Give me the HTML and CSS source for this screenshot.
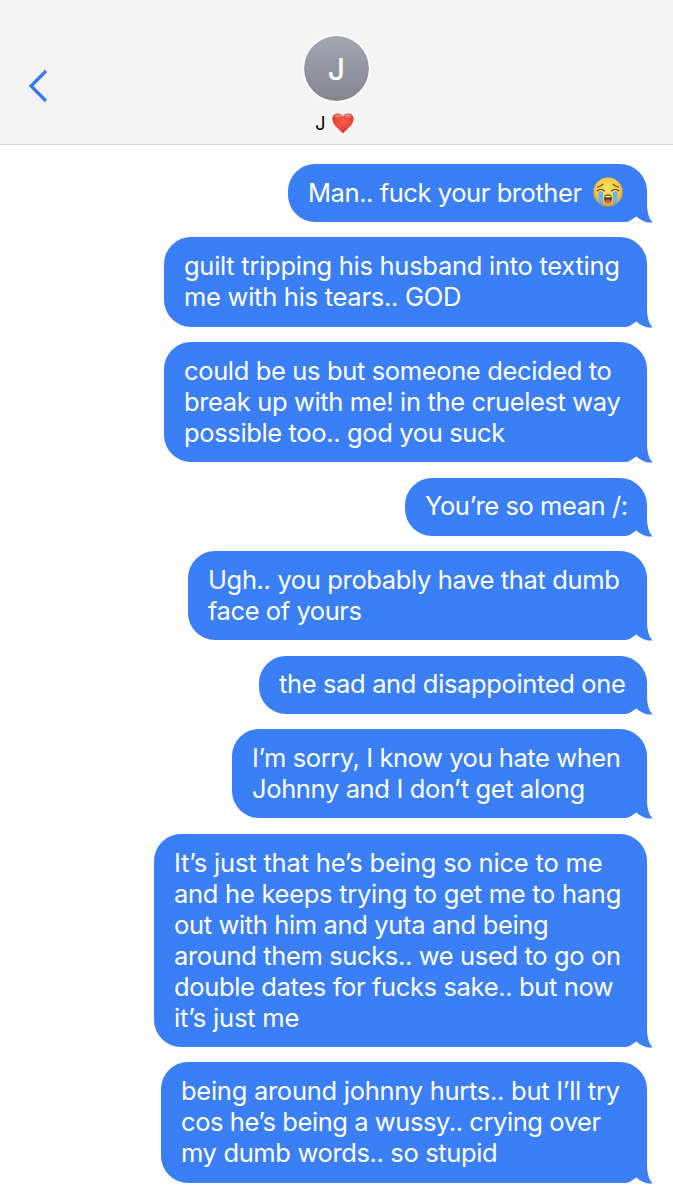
FILE: index.html
```
<!DOCTYPE html>
<html lang="en">
<head>
  <meta charset="utf-8">
  <title>Messages</title>
  <link rel="stylesheet" href="styles.css">
</head>
<body>
  <svg class="defs" width="0" height="0" aria-hidden="true">
    <symbol id="tail" viewBox="0 0 34 30">
      <path d="M0 0H27V9C27 17 28.500 24.500 32.700 28.500C26.500 29.200 20.500 26.500 16 22C13 24.500 11 27.500 5 28H0Z" fill="#3a7ff5"/>
    </symbol>
  </svg>
  <div class="header">
    <button class="back-button" aria-label="Back">
      <svg width="20" height="34" viewBox="0 0 20 34" fill="none" stroke="#3478f2" stroke-width="3.200">
        <path d="M18 2L3 17L18 32"/>
      </svg>
    </button>
    <div class="contact">
      <div class="avatar">J</div>
      <div class="name">
        <span>J</span>
        <svg class="heart" viewBox="0 0 22 21">
          <defs>
            <radialGradient id="heartFill" cx="50%" cy="40%" r="60%">
              <stop offset="0" stop-color="#f4604c"/>
              <stop offset="0.6" stop-color="#ea4938"/>
              <stop offset="1" stop-color="#cf3021"/>
            </radialGradient>
            <linearGradient id="shine" x2="0" y2="1">
              <stop offset="0" stop-color="#fff" stop-opacity="0.55"/>
              <stop offset="1" stop-color="#fff" stop-opacity="0"/>
            </linearGradient>
          </defs>
          <path d="M11 20.500C9 17.500 0.400 12.500 0.400 6C0.400 2.600 2.800 0.500 5.700 0.500C8.300 0.500 10.300 1.900 11 4C11.700 1.900 13.700 0.500 16.300 0.500C19.200 0.500 21.600 2.600 21.600 6C21.600 12.500 13 17.500 11 20.500Z" fill="url(#heartFill)"/>
          <ellipse cx="5.800" cy="3.300" rx="3.400" ry="1.900" fill="url(#shine)"/>
          <ellipse cx="16.200" cy="3.300" rx="3.400" ry="1.900" fill="url(#shine)"/>
        </svg>
      </div>
    </div>
  </div>

  <div class="messages">
    <div class="bubble w-359">
      <span class="tight">Man.. fuck your brother</span>
      <svg class="sob" viewBox="0 0 30 30">
        <defs>
          <radialGradient id="face" cx="50%" cy="40%" r="60%">
            <stop offset="0" stop-color="#ffe368"/>
            <stop offset="0.65" stop-color="#fbc843"/>
            <stop offset="1" stop-color="#dc9a28"/>
          </radialGradient>
        </defs>
        <circle cx="15" cy="15" r="14.600" fill="url(#face)"/>
        <path d="M5.500 14.500H10V27.500Q8 27.500 5.500 25Z" fill="#65b6e9"/>
        <path d="M20 14.500H24.500V25Q22 27.500 20 27.500Z" fill="#65b6e9"/>
        <path d="M4.500 13.800Q8 10.800 11.500 13.800M18.500 13.800Q22 10.800 25.500 13.800M4.500 10Q8 9.500 10 7.200M25.500 10Q22 9.500 20 7.200" fill="none" stroke="#6d461b" stroke-width="1.200" stroke-linecap="round"/>
        <ellipse cx="15" cy="21.500" rx="3.800" ry="4.200" fill="#65361b"/>
        <path d="M12.300 19.500Q15 17.500 17.700 19.500V20.300H12.300Z" fill="#fff"/>
        <ellipse cx="15" cy="24" rx="2.500" ry="1.400" fill="#df6658"/>
      </svg>
      <svg class="tail"><use href="#tail"/></svg>
    </div>
    <div class="bubble w-483">
      <span class="loose">guilt tripping his husband into texting</span><br>
      <span class="loose">me with his tears.. GOD</span>
      <svg class="tail"><use href="#tail"/></svg>
    </div>
    <div class="bubble w-483">
      could be us but someone decided to<br>
      break up with me! in the cruelest way<br>
      possible too.. god you suck
      <svg class="tail"><use href="#tail"/></svg>
    </div>
    <div class="bubble w-242">
      <span class="tight">You’re so mean /:</span>
      <svg class="tail"><use href="#tail"/></svg>
    </div>
    <div class="bubble w-459">
      Ugh.. you probably have that dumb<br>
      <span class="tight">face of yours</span>
      <svg class="tail"><use href="#tail"/></svg>
    </div>
    <div class="bubble w-388">
      the sad and disappointed one
      <svg class="tail"><use href="#tail"/></svg>
    </div>
    <div class="bubble w-415">
      <span class="tight">I’m sorry, I know you hate when</span><br>
      Johnny and I don’t get along
      <svg class="tail"><use href="#tail"/></svg>
    </div>
    <div class="bubble w-493">
      <span class="looser">It’s just that he’s being so nice to me</span><br>
      <span class="loose">and he keeps trying to get me to hang</span><br>
      out with him and yuta and being<br>
      around them sucks.. we used to go on<br>
      double dates for fucks sake.. but now<br>
      <span class="looser">it’s just me</span>
      <svg class="tail"><use href="#tail"/></svg>
    </div>
    <div class="bubble w-486">
      <span class="loose">being around johnny hurts.. but I’ll try</span><br>
      <span class="tight">cos he’s being a wussy.. crying over</span><br>
      my dumb words.. so stupid
      <svg class="tail"><use href="#tail"/></svg>
    </div>
  </div>
</body>
</html>
```
FILE: styles.css
```
* {
  box-sizing: border-box;
}
body {
  margin: 0;
  height: 1200px;
  overflow: hidden;
  background-color: #fff;
  font-family: Inter, "Liberation Sans", sans-serif;
}
.defs {
  position: absolute;
}
.header {
  display: grid;
  grid-template-columns: 1fr auto 1fr;
  height: 145px;
  padding: 34px 0 0 28px;
  background-color: #f4f4f4;
  border-bottom: 1px solid #d9d9d9;
}
.back-button {
  justify-self: start;
  align-self: start;
  margin-top: 35px;
  padding: 0;
  background: none;
  border: none;
  cursor: pointer;
}
.back-button svg {
  display: block;
}
.contact {
  display: flex;
  flex-direction: column;
  align-items: center;
  margin-right: 28px;
}
.avatar {
  width: 69px;
  height: 69px;
  border: 2px solid #f9f9f9;
  border-radius: 50%;
  background: linear-gradient(#a3a6b3, #838690) padding-box;
  color: #fff;
  font-size: 30px;
  font-weight: 500;
  line-height: 67px;
  text-align: center;
}
.name {
  display: flex;
  align-items: center;
  gap: 6px;
  height: 22px;
  margin-top: 9px;
  margin-left: -4px;
  font-size: 18px;
}
.heart {
  width: 22px;
  height: 21px;
}
.messages {
  display: flex;
  flex-direction: column;
  align-items: flex-end;
  gap: 15.4px;
  padding: 18.8px 26px 0 0;
}
.bubble {
  position: relative;
  isolation: isolate;
  padding: 12.8px 0 14.4px 20px;
  border-radius: 27px;
  background-color: #3a7ff5;
  color: #fff;
  font-size: 25.5px;
  line-height: 31px;
  letter-spacing: -0.36px;
  white-space: nowrap;
}
.tight {
  letter-spacing: -0.43px;
}
.loose {
  letter-spacing: -0.27px;
}
.looser {
  letter-spacing: -0.17px;
}
.tail {
  position: absolute;
  z-index: -1; /* keep it under the text */
  right: -7px;
  bottom: -2px;
  width: 34px;
  height: 30px;
}
.sob {
  width: 30px;
  height: 30px;
  margin-left: 5px;
  vertical-align: top;
}
.w-242 { width: 242px; }
.w-359 { width: 359px; }
.w-388 { width: 388px; }
.w-415 { width: 415px; }
.w-459 { width: 459px; }
.w-483 { width: 483px; }
.w-486 { width: 486px; }
.w-493 { width: 493px; }
```
